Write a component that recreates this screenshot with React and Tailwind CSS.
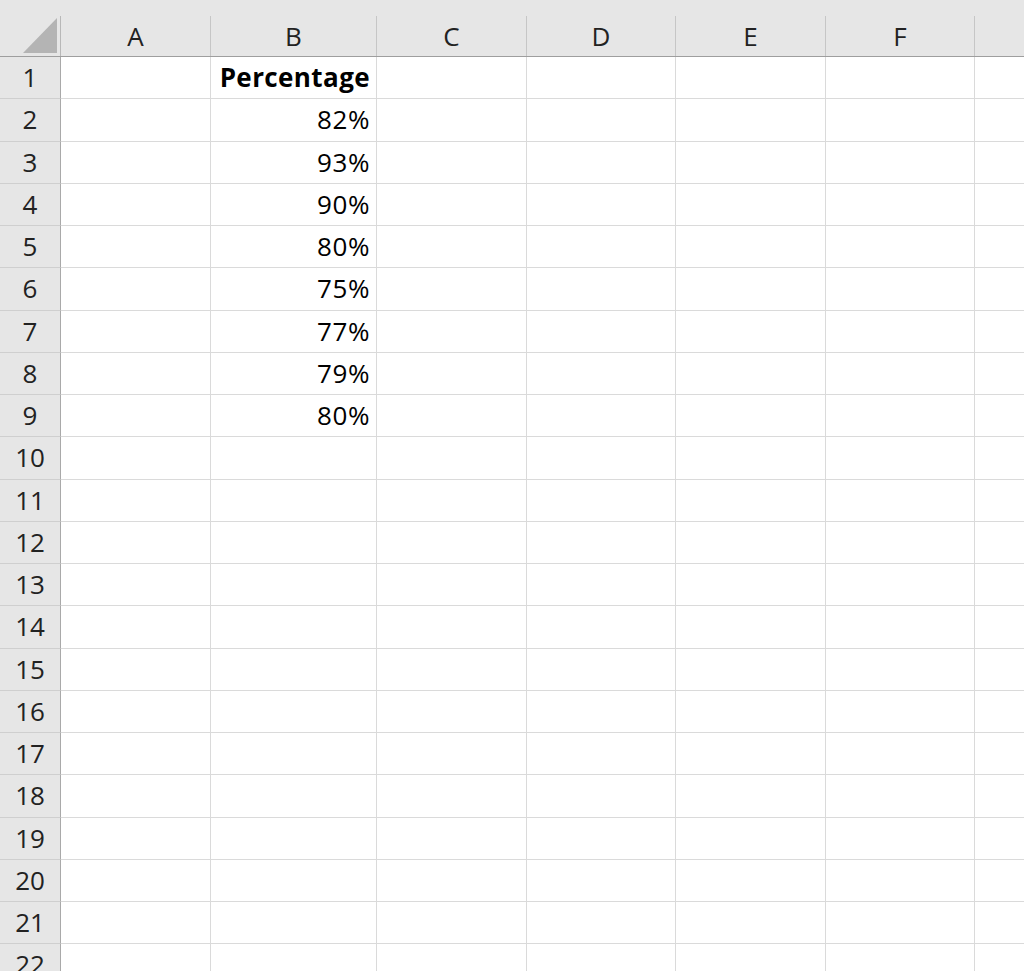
import React from "react";

const cols = [
  { label: "A", w: "w-[150px]" },
  { label: "B", w: "w-[166px]" },
  { label: "C", w: "w-[150px]" },
  { label: "D", w: "w-[149px]" },
  { label: "E", w: "w-[150px]" },
  { label: "F", w: "w-[149px]" },
];

const data = {
  1: "Percentage",
  2: "82%",
  3: "93%",
  4: "90%",
  5: "80%",
  6: "75%",
  7: "77%",
  8: "79%",
  9: "80%",
};

const rows = Array.from({ length: 22 }, (_, i) => i + 1);

function Row({ n }) {
  const v = data[n];
  return (
    <div className="flex h-[42.25px] shrink-0">
      <div className="w-[61px] shrink-0 bg-[#e6e6e6] border-r border-r-[#a9a9a9] border-b border-b-[#cfcfcf] flex items-center justify-center text-[26px] text-[#222]">
        {n}
      </div>
      {cols.map((c, i) => (
        <div
          key={c.label}
          className={`${c.w} shrink-0 border-r border-b border-[#dadada] flex items-center justify-end pr-[6px] text-[26px] text-black`}
        >
          {i === 1 && v ? (
            <span className={n === 1 ? "font-bold tracking-[0.4px]" : "tracking-[0.6px]"}>{v}</span>
          ) : null}
        </div>
      ))}
      <div className="flex-1 border-b border-[#dadada]" />
    </div>
  );
}

export default function App() {
  return (
    <div
      className="w-[1024px] h-[971px] overflow-hidden bg-white flex flex-col"
      style={{ fontFamily: '"Open Sans", "Noto Sans", sans-serif' }}
    >
      <div className="flex h-[57px] shrink-0 bg-[#e6e6e6] border-b border-[#9e9e9e]">
        <div className="w-[61px] shrink-0 flex flex-col">
          <div className="h-[16px]" />
          <div className="flex-1 border-r border-[#b8b8b8] flex items-end justify-end pr-[3px] pb-[3px]">
            <svg width="34" height="35" viewBox="0 0 34 35">
              <polygon points="34,0 34,35 0,35" fill="#b4b4b4" />
            </svg>
          </div>
        </div>
        {cols.map((c) => (
          <div key={c.label} className={`${c.w} shrink-0 flex flex-col`}>
            <div className="h-[16px]" />
            <div className="flex-1 border-r border-[#c6c6c6] flex items-center justify-center text-[26px] text-[#222]">
              {c.label}
            </div>
          </div>
        ))}
        <div className="flex-1" />
      </div>
      {rows.map((n) => (
        <Row key={n} n={n} />
      ))}
    </div>
  );
}
